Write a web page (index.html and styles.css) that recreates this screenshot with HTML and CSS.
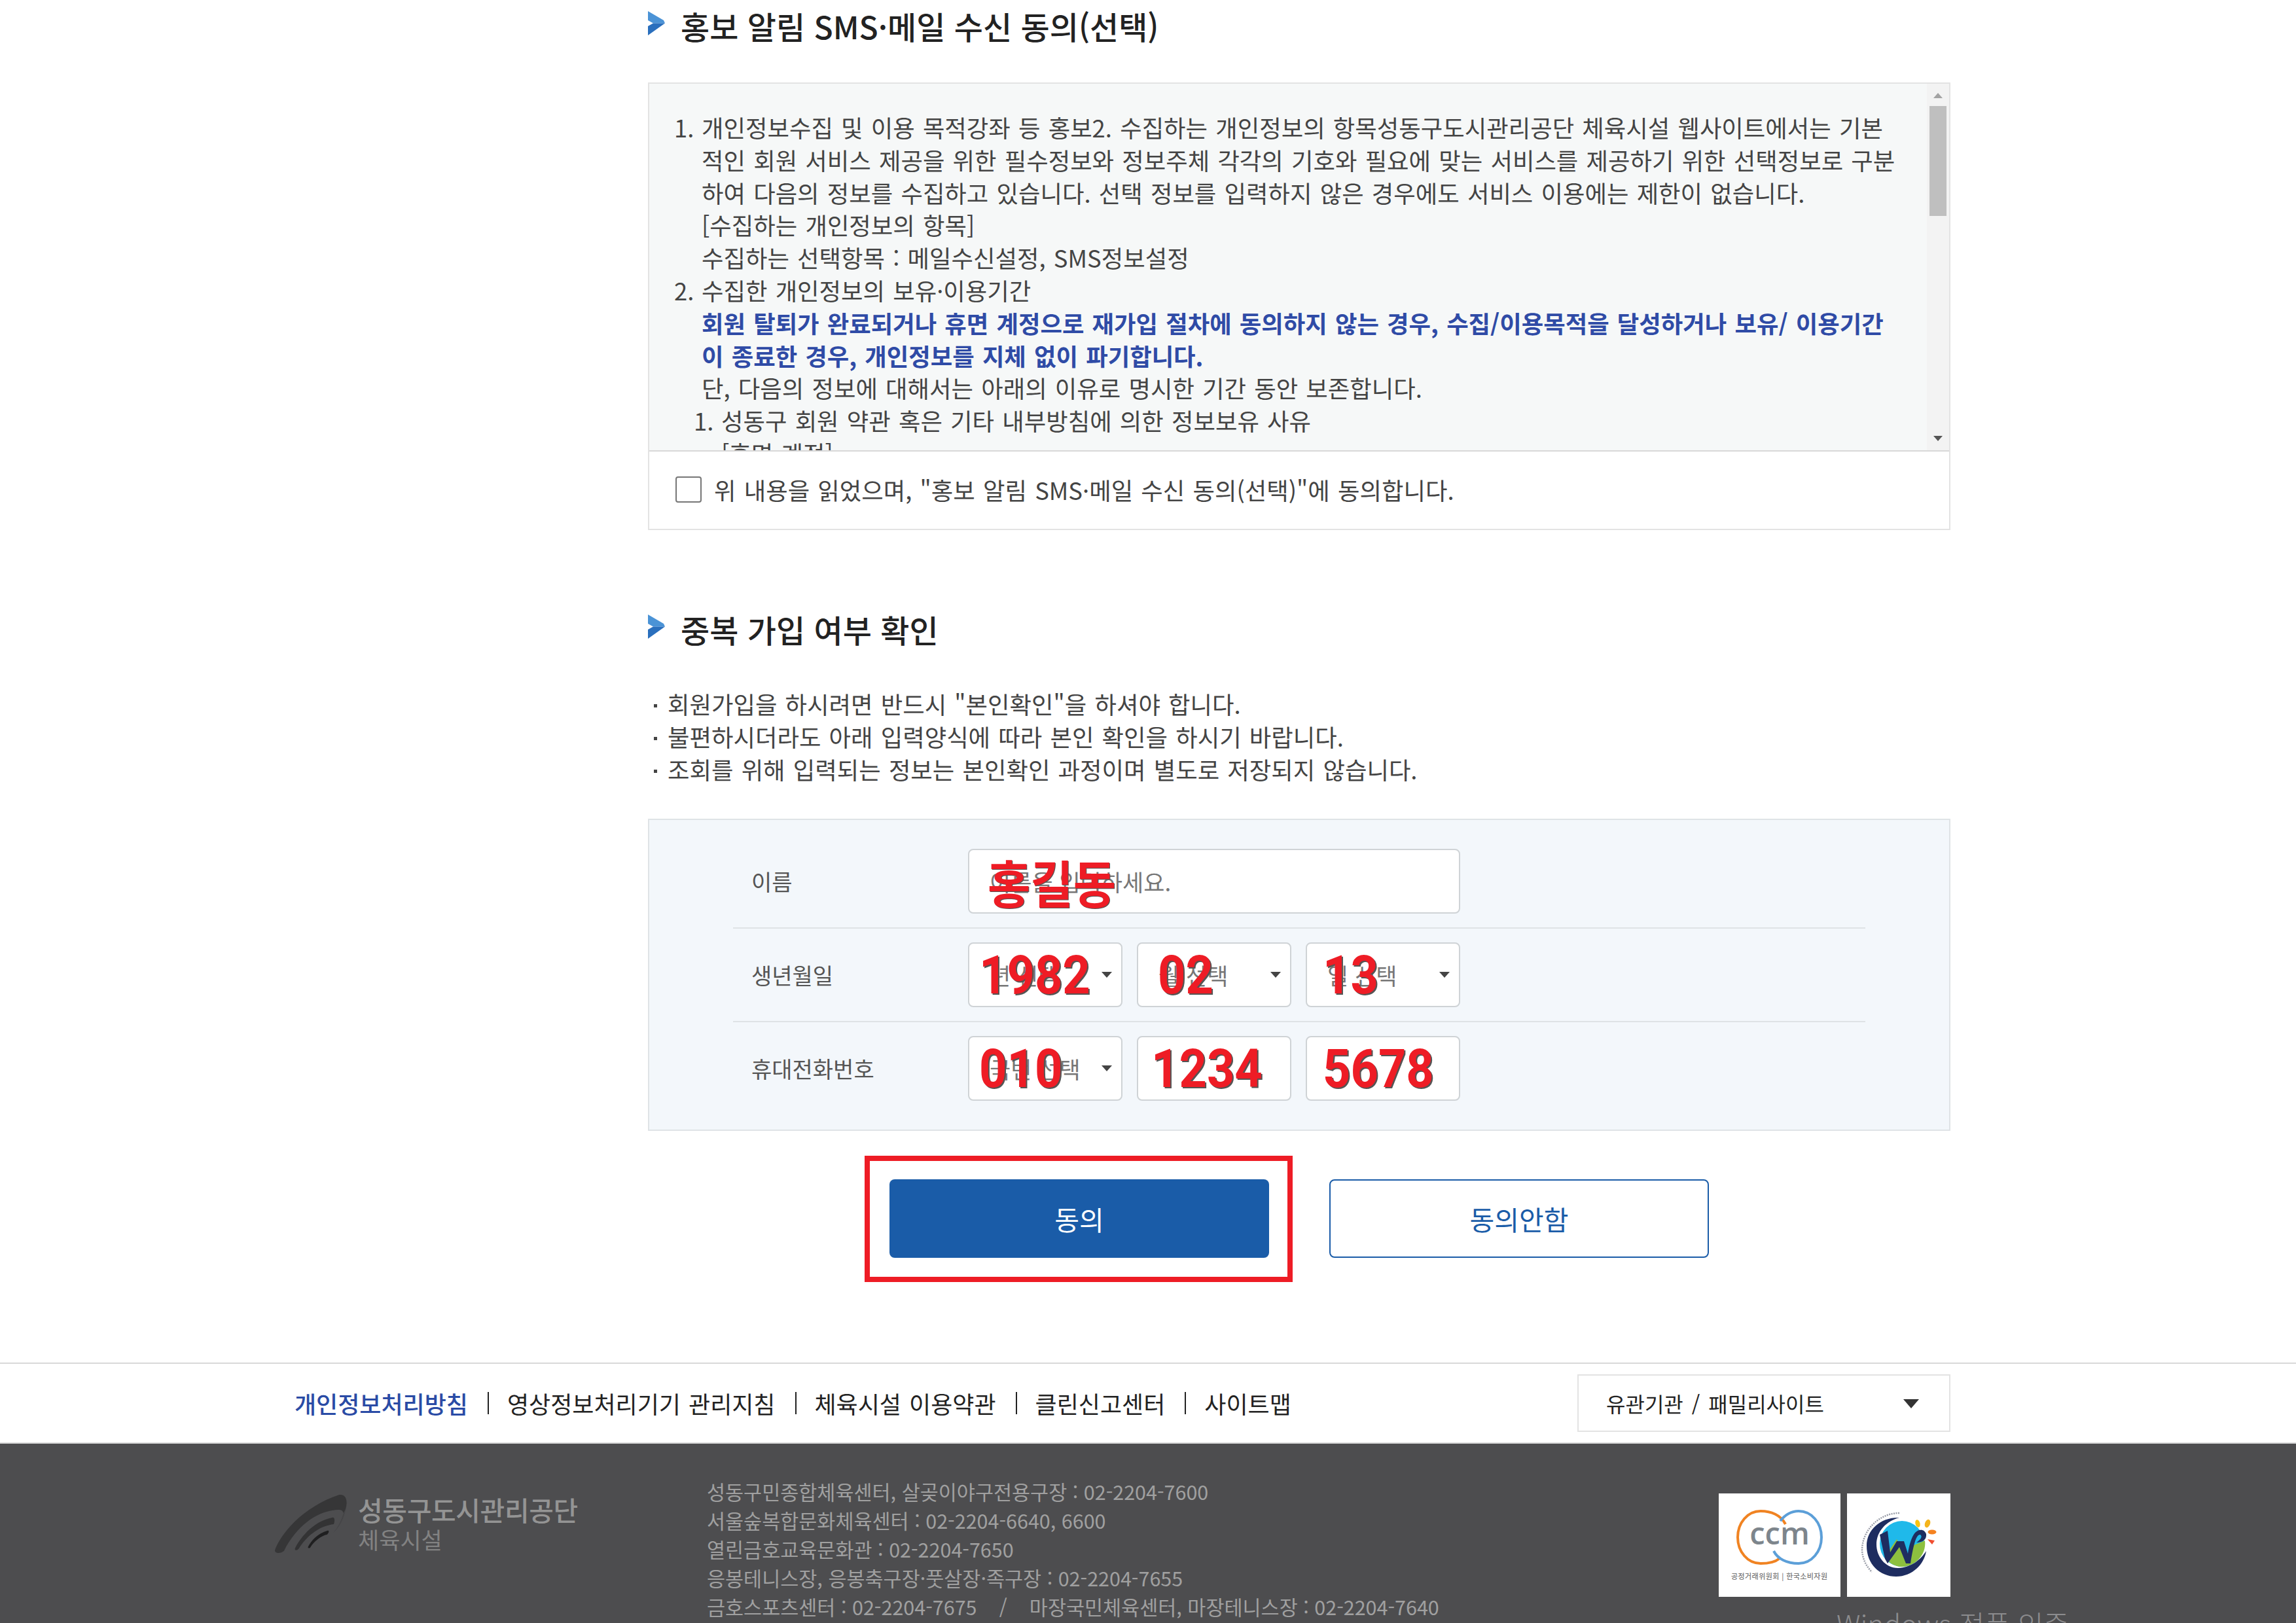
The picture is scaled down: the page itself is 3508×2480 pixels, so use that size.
FILE: index.html
```html
<!DOCTYPE html>
<html lang="ko">
<head>
<meta charset="utf-8">
<title>회원가입 동의</title>
<link rel="stylesheet" href="styles.css">
</head>
<body>
<main class="main">
  <h2 class="heading">
    <svg class="chev" viewBox="0 0 26 37"><path d="M0 0 L24 14 L26 18.5 L8 18.5 L0 14 Z" fill="#4b93d6"/><path d="M0 37 L26 18.5 L8 18.5 L0 23 Z" fill="#2a6fbd"/></svg>
    <span class="heading-text">홍보 알림 SMS·메일 수신 동의(선택)</span>
  </h2>
  <section class="terms">
    <div class="terms-scroll">
      <ol class="terms-list">
        <li>개인정보수집 및 이용 목적강좌 등 홍보2. 수집하는 개인정보의 항목성동구도시관리공단 체육시설 웹사이트에서는 기본<br>적인 회원 서비스 제공을 위한 필수정보와 정보주체 각각의 기호와 필요에 맞는 서비스를 제공하기 위한 선택정보로 구분<br>하여 다음의 정보를 수집하고 있습니다. 선택 정보를 입력하지 않은 경우에도 서비스 이용에는 제한이 없습니다.<br>[수집하는 개인정보의 항목]<br>수집하는 선택항목 : 메일수신설정, SMS정보설정</li>
        <li>수집한 개인정보의 보유·이용기간<br><strong class="strong-blue">회원 탈퇴가 완료되거나 휴면 계정으로 재가입 절차에 동의하지 않는 경우, 수집/이용목적을 달성하거나 보유/ 이용기간<br>이 종료한 경우, 개인정보를 지체 없이 파기합니다.</strong><br>단, 다음의 정보에 대해서는 아래의 이유로 명시한 기간 동안 보존합니다.
          <ol class="terms-sub"><li>성동구 회원 약관 혹은 기타 내부방침에 의한 정보보유 사유<br>[휴면 계정]</li></ol>
        </li>
      </ol>
      <div class="scrollbar">
        <span class="sb-up"></span>
        <span class="sb-thumb"></span>
        <span class="sb-down"></span>
      </div>
    </div>
    <label class="agree"><span class="checkbox"></span><span class="agree-text">위 내용을 읽었으며, "홍보 알림 SMS·메일 수신 동의(선택)"에 동의합니다.</span></label>
  </section>

  <h2 class="heading heading-second">
    <svg class="chev" viewBox="0 0 26 37"><path d="M0 0 L24 14 L26 18.5 L8 18.5 L0 14 Z" fill="#4b93d6"/><path d="M0 37 L26 18.5 L8 18.5 L0 23 Z" fill="#2a6fbd"/></svg>
    <span class="heading-text">중복 가입 여부 확인</span>
  </h2>
  <ul class="notes">
    <li>회원가입을 하시려면 반드시 "본인확인"을 하셔야 합니다.</li>
    <li>불편하시더라도 아래 입력양식에 따라 본인 확인을 하시기 바랍니다.</li>
    <li>조회를 위해 입력되는 정보는 본인확인 과정이며 별도로 저장되지 않습니다.</li>
  </ul>

  <section class="form">
    <div class="row">
      <span class="label">이름</span>
      <div class="field field-full"><span class="ph">이름을 입력하세요.</span><span class="mark mark-name">홍길동</span></div>
    </div>
    <div class="row">
      <span class="label">생년월일</span>
      <div class="field select"><span class="ph">년 선택</span><span class="mark mark-num">1982</span></div>
      <div class="field select"><span class="ph">월 선택</span><span class="mark mark-num mark-b">02</span></div>
      <div class="field select"><span class="ph">일 선택</span><span class="mark mark-num mark-c">13</span></div>
    </div>
    <div class="row row-last">
      <span class="label">휴대전화번호</span>
      <div class="field select"><span class="ph">국번 선택</span><span class="mark mark-num">010</span></div>
      <div class="field"><span class="mark mark-num mark-d">1234</span></div>
      <div class="field"><span class="mark mark-num mark-c">5678</span></div>
    </div>
  </section>

  <div class="actions">
    <div class="btn btn-primary">동의<span class="red-box"></span></div>
    <div class="btn btn-outline">동의안함</div>
  </div>
</main>

<nav class="site-links">
  <a class="link link-active">개인정보처리방침</a>
  <a class="link">영상정보처리기기 관리지침</a>
  <a class="link">체육시설 이용약관</a>
  <a class="link">클린신고센터</a>
  <a class="link">사이트맵</a>
  <div class="family">유관기관 / 패밀리사이트<span class="family-arrow"></span></div>
</nav>

<footer class="footer">
  <div class="logo">
    <svg class="swoosh" viewBox="30 40 336 276">
      <path d="M344 126 C336 160 318 192 298 218 C326 192 350 150 358 92 Z" fill="#454547"/>
      <path d="M30 298 C45 250 130 110 325 43 C350 40 362 60 358 90 C356 105 350 118 344 126 C340 115 335 112 320 112 C235 115 135 175 72 300 C60 312 30 315 30 298 Z" fill="#363637"/>
      <path d="M122 290 C140 250 200 165 295 147 C305 146 305 165 300 178 C240 185 180 225 140 290 C132 300 120 300 122 290 Z" fill="#333334"/>
      <path d="M182 282 C195 255 225 220 272 207 C280 207 278 215 270 225 C240 232 210 255 192 285 C188 290 180 288 182 282 Z" fill="#1f1f20"/>
    </svg>
    <div class="logo-text">
      <strong class="logo-name">성동구도시관리공단</strong>
      <span class="logo-sub">체육시설</span>
    </div>
  </div>
  <div class="contacts">
    <p>성동구민종합체육센터, 살곶이야구전용구장 : 02-2204-7600</p>
    <p>서울숲복합문화체육센터 : 02-2204-6640, 6600</p>
    <p>열린금호교육문화관 : 02-2204-7650</p>
    <p>응봉테니스장, 응봉축구장·풋살장·족구장 : 02-2204-7655</p>
    <p>금호스포츠센터 : 02-2204-7675 &nbsp;&nbsp; / &nbsp;&nbsp; 마장국민체육센터, 마장테니스장 : 02-2204-7640</p>
  </div>
  <div class="badges">
    <div class="badge badge-ccm">
      <svg class="logo-svg" viewBox="0 0 186 158">
        <path d="M102 47 C95 33 80 27 64 27 C44 27 29 45 29 67 C29 89 44 107 64 107 C76 107 86 105 92 100" fill="none" stroke="#f08322" stroke-width="4"/>
        <path d="M94 42 C102 32 112 27 122 27 C142 27 157 45 157 67 C157 89 142 107 122 107 C104 107 90 100 84 88" fill="none" stroke="#5c9fd8" stroke-width="4"/>
        <text class="ccm-word" x="93" y="78" text-anchor="middle">ccm</text>
        <text class="ccm-small" x="19" y="131" textLength="147" lengthAdjust="spacing">공정거래위원회 | 한국소비자원</text>
      </svg>
    </div>
    <div class="badge badge-w">
      <svg class="logo-svg" viewBox="0 0 158 158">
        <path d="M80 30 C50 30 24 55 23 85 C23 100 30 112 38 120" fill="none" stroke="#9a9ea8" stroke-width="2.5" stroke-dasharray="2 1.5"/>
        <ellipse cx="84" cy="77" rx="34" ry="35" fill="#1fb9ea"/>
        <path d="M119 72 C122 95 102 112 84 112 C72 112 62 105 58 96 L76 70 L92 100 L100 80 Z" fill="#8dc03f"/>
        <path d="M80 37 C52 36 30 55 30 80 C30 108 50 127 75 127 C100 127 118 108 121 88 C112 102 98 113 78 114 C58 114 45 96 45 78 C45 58 60 42 80 37 Z" fill="#1e2d60"/>
        <path d="M50 63 L62 57 L66 90 L76 73 L87 73 L93 92 C95 78 99 66 104 60 C110 54 118 54 121 62 C122 70 116 75 106 75 C112 71 116 66 112 63 C106 62 102 76 97 107 L90 107 L80 82 L62 107 L58 100 Z" fill="#1e2d60"/>
        <ellipse cx="108" cy="46" rx="3.5" ry="6" transform="rotate(-15 108 46)" fill="#fcc40f"/>
        <ellipse cx="123" cy="46" rx="4" ry="6.5" transform="rotate(20 123 46)" fill="#f4b41c"/>
        <ellipse cx="130" cy="59" rx="6.5" ry="3.5" fill="#f58220"/>
        <path d="M123 70 L134 72 L130 78 Z" fill="#f04e30"/>
      </svg>
    </div>
  </div>
</footer>
<div class="watermark">Windows 정품 인증</div>
</body>
</html>
```

FILE: styles.css
```css
* { box-sizing: border-box; }
html, body { margin: 0; padding: 0; height: 2480px; overflow: hidden; background: #fff; }
body { position: relative; font-family: "Noto Sans CJK KR", "Noto Sans", sans-serif; color: #333; }
ol, ul { margin: 0; padding: 0; }
p { margin: 0; }

.main { width: 1990px; margin-left: 990px; }

.heading { display: flex; align-items: center; gap: 24px; height: 80px; margin: 0; font-size: 48px; font-weight: 500; color: #222; }
.heading-second { margin-top: 112px; }
.heading-text { margin-top: -3px; }
.chev { width: 26px; height: 37px; flex: none; margin-top: -9px; }

.terms { margin-top: 46px; border: 2px solid #e3e3e3; background: #fff; }
.terms-scroll { position: relative; height: 562px; overflow: hidden; background: #f6f8f8; border-bottom: 2px solid #d8d8d8; padding: 42px 60px 0 38px; font-size: 36.4px; line-height: 49.8px; word-spacing: 2px; color: #444; }
.terms-list { list-style: none; counter-reset: item; white-space: nowrap; }
.terms-list > li { position: relative; padding-left: 42px; counter-increment: item; }
.terms-list > li::before { content: counter(item) "."; position: absolute; left: 0; }
.terms-sub { list-style: none; padding-left: 30px; }
.terms-sub > li { position: relative; }
.terms-sub > li::before { content: "1."; position: absolute; left: -42px; }
.strong-blue { color: #2f4ba6; font-weight: 700; }

.scrollbar { position: absolute; top: 0; right: 0; bottom: 0; width: 34px; background: #f3f3f3; }
.sb-thumb { position: absolute; top: 34px; left: 4px; width: 26px; height: 168px; background: #bfbfbf; }
.sb-up { position: absolute; top: 14px; left: 10px; border-left: 7px solid transparent; border-right: 7px solid transparent; border-bottom: 8px solid #a3a3a3; }
.sb-down { position: absolute; bottom: 14px; left: 10px; border-left: 7px solid transparent; border-right: 7px solid transparent; border-top: 8px solid #555; }

.agree { display: flex; align-items: center; height: 118px; padding-left: 40px; font-size: 36.4px; word-spacing: 2px; color: #444; }
.agree-text { margin-top: -3px; }
.checkbox { width: 40px; height: 40px; margin-right: 19px; border: 2px solid #767676; border-radius: 4px; background: #fff; flex: none; margin-top: -3px; }

.notes { list-style: none; margin-top: 48px; font-size: 36.4px; line-height: 50px; word-spacing: 2px; color: #444; }
.notes li { position: relative; padding-left: 30px; }
.notes li::before { content: ""; position: absolute; left: 9px; top: 26px; width: 5px; height: 5px; background: #444; }

.form { margin-top: 51px; padding: 23px 128px; background: #f3f7fb; border: 2px solid #dfe3e6; }
.row { display: flex; gap: 22px; padding: 21px 0; border-bottom: 2px solid #dfe3e6; align-items: center; }
.row-last { border-bottom: 0; }
.label { width: 338px; padding-left: 28px; font-size: 34px; color: #555; flex: none; margin-right: -1px; }
.field { position: relative; width: 236px; height: 99px; padding-left: 31px; display: flex; align-items: center; background: #fff; border: 2px solid #cfd3d6; border-radius: 8px; font-size: 35px; color: #777; }
.field-full { width: 752px; }
.select::after { content: ""; position: absolute; right: 14px; top: 43px; border-left: 8px solid transparent; border-right: 8px solid transparent; border-top: 9px solid #444; }
.ph { white-space: nowrap; }
.mark { position: absolute; top: 50%; color: #ee1c25; font-weight: 700; text-shadow: 2px 2px 0 #555; white-space: nowrap; transform: translateY(-50%) scaleY(1.1); }
.mark-name { left: 28px; font-size: 71px; text-shadow: 1px 1px 0 #555; }
.mark-num { left: 15px; font-family: Roboto, sans-serif; font-size: 74px; line-height: 1; }
.mark-b { left: 30px; }
.mark-c { left: 24px; }
.mark-d { left: 20px; }

.actions { display: flex; justify-content: center; gap: 92px; margin-top: 74px; }
.btn { position: relative; display: flex; align-items: center; justify-content: center; width: 580px; height: 120px; border-radius: 8px; font-size: 41px; }
.btn-primary { background: #1a5ca8; color: #fff; }
.btn-outline { border: 2px solid #1a5ca8; color: #1a5ca8; }
.red-box { position: absolute; left: -38px; right: -36px; top: -36px; bottom: -37px; border: 8px solid #ee1c25; }

.site-links { display: flex; align-items: center; height: 122px; margin-top: 160px; padding: 0 528px 0 450px; border-top: 2px solid #d8d8d8; }
.link { font-size: 36px; word-spacing: 2px; color: #222; white-space: nowrap; }
.link + .link { margin-left: 30px; padding-left: 30px; background: linear-gradient(#222, #222) left center / 2px 34px no-repeat; }
.link-active { color: #2a4ba5; font-weight: 500; }
.family { position: relative; margin-left: auto; width: 570px; height: 88px; padding-left: 42px; display: flex; align-items: center; border: 2px solid #e3e3e3; font-size: 32px; word-spacing: 4px; color: #222; }
.family-arrow { position: absolute; right: 46px; top: 36px; border-left: 12px solid transparent; border-right: 12px solid transparent; border-top: 14px solid #333; }

.footer { display: flex; height: 278px; padding: 51px 528px 0 420px; background: #4d4d4f; border-top: 2px solid #d8d8d8; color: #a0a0a0; }
.logo { display: flex; gap: 15px; width: 660px; flex: none; padding-top: 26px; }
.swoosh { width: 112px; height: 92px; flex: none; }
.logo-text { display: flex; flex-direction: column; }
.logo-name { font-size: 41px; line-height: 46px; font-weight: 500; color: #949494; letter-spacing: -0.4px; white-space: nowrap; }
.logo-sub { font-size: 35px; line-height: 46px; color: #828282; white-space: nowrap; }
.contacts { font-size: 30.5px; line-height: 44px; white-space: nowrap; }
.badges { display: flex; gap: 10px; margin-left: auto; padding-top: 25px; }
.badge { height: 158px; background: #fff; }
.badge-ccm { width: 186px; }
.badge-w { width: 158px; }
.logo-svg { display: block; width: 100%; height: 100%; }
.ccm-word { font-family: "Open Sans", sans-serif; font-size: 47px; font-weight: 600; fill: #7d858c; }
.ccm-small { font-size: 11px; font-weight: 500; fill: #777; }

.watermark { position: absolute; left: 2806px; top: 2450px; font-size: 42.5px; font-weight: 300; color: #8c8c8e; white-space: nowrap; }
```
